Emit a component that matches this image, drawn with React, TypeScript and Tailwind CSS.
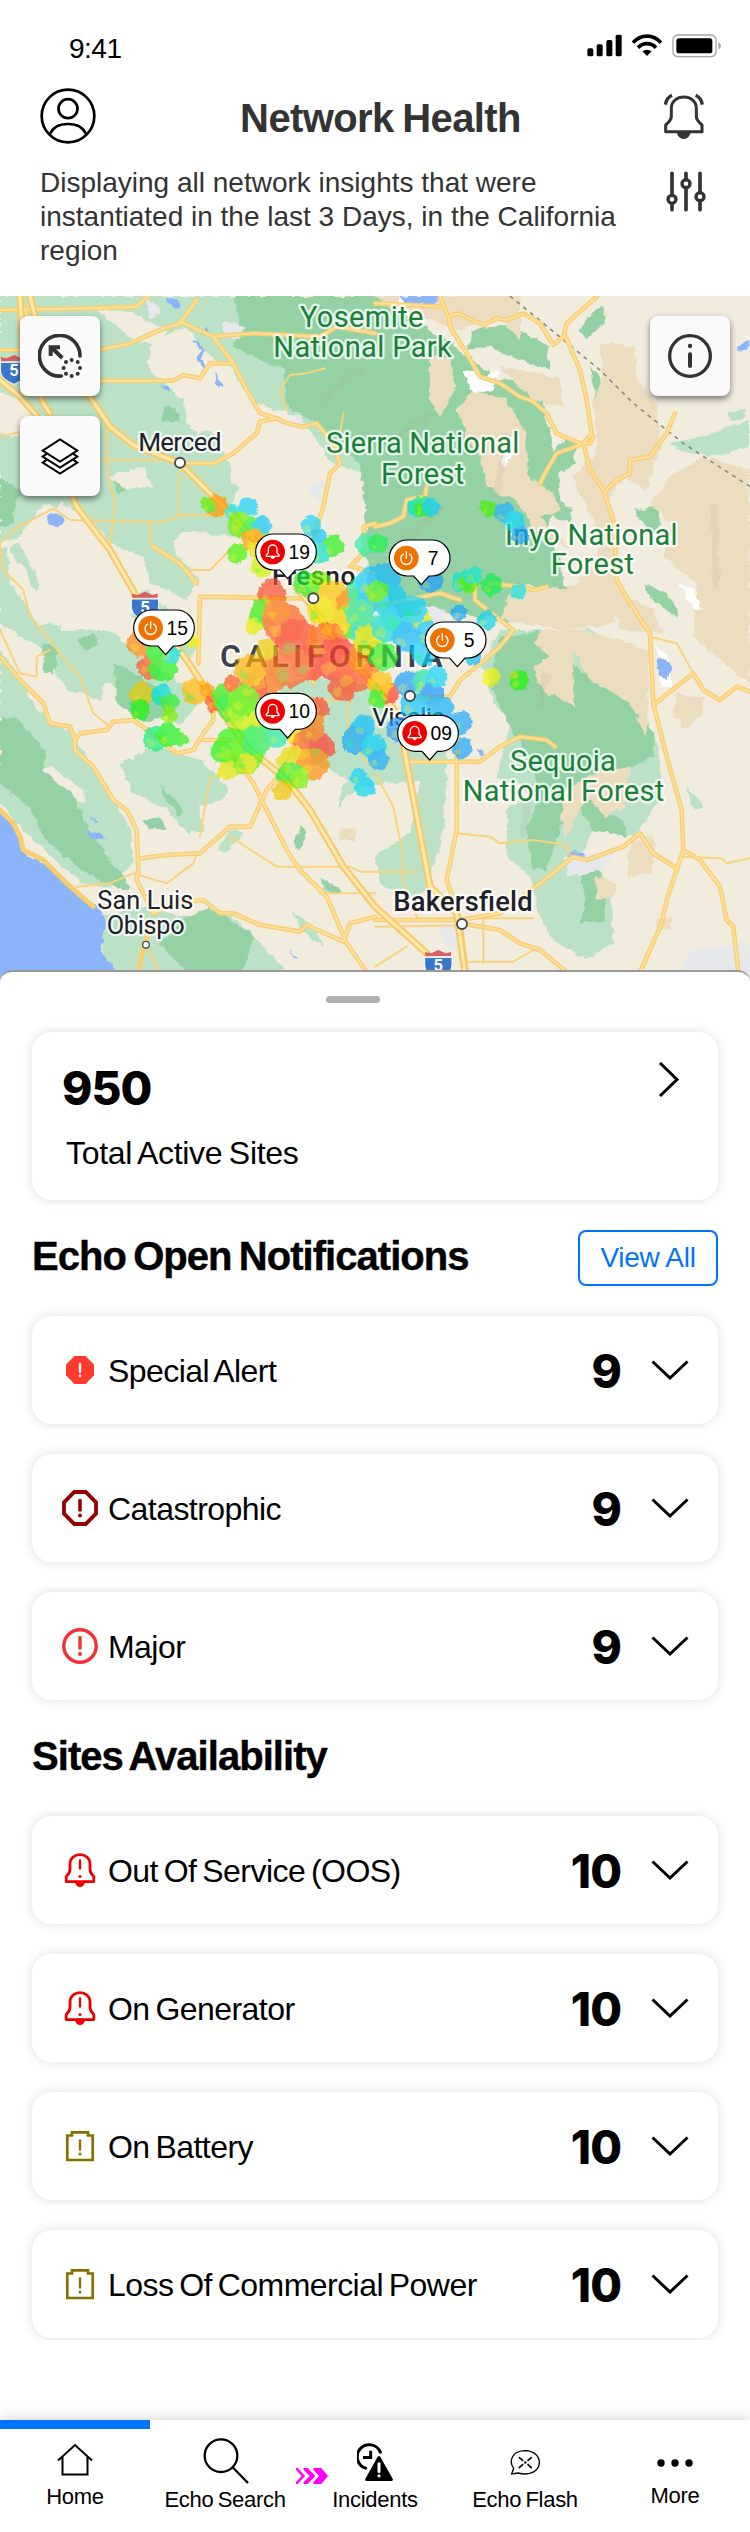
import React from "react";

/* ---------- map ---------- */

const lightGreen: string[] = [
  "M0 18H1125V560L1000 520L900 380L760 340L690 230L560 150L480 150L440 220L520 300L590 350L560 385L590 430L640 420L700 500L690 560L720 600L700 640L780 680L800 760L700 740L540 720L520 790L600 860L560 930L450 880L430 800L330 760L260 680L130 640L60 740L0 760Z",
  "M0 780L60 760L120 880L90 960L180 1010L260 1100L330 1140L300 1230L200 1200L130 1080L0 1000Z",
  "M0 1080L60 1160L110 1260L200 1320L260 1400L330 1500L390 1620L400 1720L330 1790L250 1780L130 1680L70 1620L0 1540Z",
  "M120 1020L330 1020L420 1100L540 1180L600 1240L540 1300L420 1250L330 1180L230 1150L170 1060Z",
  "M360 1420L470 1370L600 1410L690 1500L640 1540L590 1550L620 1620L560 1630L500 1560L400 1510Z",
  "M830 1180L990 1160L1125 1190L1200 1300L1340 1280L1340 1440L1330 1640L1290 1760L1300 1800L1220 1820L1140 1780L1130 1690L1230 1630L1260 1470L1090 1490L940 1420Z",
  "M350 930L440 900L530 990L600 1060L560 1110L470 1060Z",
  "M1500 1020L1780 1020L1900 1200L1980 1380L1980 1530L1900 1640L1780 1620L1740 1700L1700 1740L1830 1800L1840 1960L1760 2010L1660 1950L1620 1880L1590 1760L1520 1700L1520 1560L1600 1500L1490 1460L1510 1380L1540 1290L1480 1240L1450 1120Z",
  "M300 1880L420 1850L560 1880L690 1870L780 1960L860 2046L310 2046Z",
  "M2010 460L2110 440L2250 390L2250 470L2130 500L2030 480ZM2180 370L2240 355L2230 385L2190 390Z",
  "M1030 1480L1060 1460L1080 1490L1010 1550ZM880 1870L930 1900L970 1970L910 1930ZM650 1680L690 1620L730 1630L680 1690Z",
  "M2060 1490L2090 1520L2110 1560L2080 1560Z",
];

const green: string[] = [
  "M700 18L1125 18L1340 150L1480 260L1620 300L1680 560L1650 700L1600 780L1510 860L1450 990L1340 960L1200 960L1125 860L1090 640L1080 520L950 400L860 350L850 240L700 170L720 90Z",
  "M1120 560L1400 560L1590 640L1680 800L1690 880L1750 930L1710 950L1640 930L1560 990L1500 1000L1440 960L1200 980L1090 800Z",
  "M1420 120L1530 100L1640 170L1650 240L1560 210L1470 170L1400 180Z",
  "M1700 440L1740 460L1720 520L1660 560L1680 630L1720 660L1710 700L1660 680L1630 610L1640 520Z",
  "M1770 230L1800 260L1810 340L1840 370L1820 410L1790 390L1780 300Z",
  "M1820 160L1860 180L1880 260L1930 320L1970 400L1970 430L1920 470L1910 440L1930 380L1870 300L1830 220Z",
  "M1740 120L1780 60L1810 50L1815 100L1780 130L1760 150Z",
  "M1840 490L1890 480L1890 530L1850 570L1830 540Z",
  "M1900 660L1970 650L1985 700L1960 730L1910 680Z",
  "M2050 780L2100 790L2090 830L2060 820Z",
  "M1930 880L2000 910L2040 980L2010 970L1950 920Z",
  "M1500 1040L1650 1020L1720 1130L1880 1220L1960 1330L1960 1400L1860 1440L1790 1460L1700 1500L1700 1560L1640 1740L1600 1740L1580 1620L1620 1520L1600 1430L1530 1310L1470 1180Z",
  "M1740 1500L1800 1560L1870 1590L1880 1640L1780 1620L1740 1560Z",
  "M1900 1680L1940 1700L1900 1760L1880 1740Z",
  "M1740 1760L1800 1740L1820 1900L1740 1900L1760 1820Z",
  "M0 1280L60 1290L140 1390L130 1440L220 1520L280 1640L390 1790L370 1800L240 1740L130 1640L90 1550L0 1480Z",
  "M480 1480L550 1560L540 1580L490 1520ZM340 1120L470 1190L520 1270L430 1300L350 1240Z",
  "M480 1960L560 1880L640 1850L760 1940L730 2046L560 2046Z",
  "M0 560L60 600L40 700L0 710ZM230 1050L280 1030L300 1060L260 1080Z",
  "M900 1600L920 1630L900 1680L880 1660ZM960 1760L1020 1800L1010 1810L970 1800Z",
  "M490 350L530 350L540 390L490 400ZM340 570L380 600L350 610Z",
  "M130 1060L180 1080L160 1150L130 1150ZM430 1590L480 1580L500 1620L450 1620Z",
];

const beige: string[] = [
  "M270 50L400 70L500 120L470 170L400 150L330 90Z",
  "M450 150L560 110L610 180L690 250L620 300L740 330L780 440L830 510L860 570L930 600L1000 640L1010 720L930 760L900 900L820 950L780 780L700 640L720 590L640 420L570 420L550 330L450 240Z",
  "M320 560L430 530L460 590L380 600Z",
  "M180 640L290 700L340 800L430 920L380 1000L200 900L150 760Z",
  "M540 730L590 750L640 830L620 900L540 790Z",
  "M0 310L80 330L150 400L60 440L0 430Z",
  "M20 760L80 850L150 1000L120 1010L30 880Z",
  "M50 1460L150 1430L250 1500L260 1540L140 1520L80 1520Z",
];

const tan: string[] = [
  "M1290 200L1350 200L1370 300L1320 380L1290 330ZM1480 18L1125 18L1180 60L1290 90L1370 120L1500 80L1560 150L1560 18Z",
  "M1500 230L1580 240L1680 270L1690 350L1600 330Z",
  "M1370 360L1420 300L1520 330L1580 430L1580 560L1650 600L1680 660L1620 680L1720 780L1600 720L1550 630L1460 590L1440 500L1400 440Z",
  "M1800 160L1900 170L1910 260L1970 340L1980 470L1940 600L1870 560L1820 640L1860 720L1850 900L1960 960L1990 1030L1870 1020L1800 900L1790 720L1720 560L1790 480L1780 330L1810 260Z",
  "M2010 560L2110 500L2250 540L2250 1180L2150 1100L2080 1040L2090 880L1990 800L2010 700L1950 640Z",
  "M1540 880L1700 900L1780 830L1840 920L1840 1000L1700 1020L1500 990Z",
  "M1620 1020L1740 1020L1820 1040L1950 1080L1940 1340L1890 1240L1770 1170L1720 1080L1720 1250L1630 1200L1600 1130L1650 1100L1600 1060Z",
  "M1700 1500L1780 1450L1890 1430L1880 1550L1820 1580L1760 1520L1720 1600L1700 1640L1680 1580Z",
  "M2030 1210L2110 1220L2110 1270L2050 1320L2020 1270Z",
  "M1890 1660L1960 1640L1960 1750L1880 1760ZM1790 1760L1850 1780L1840 1820L1790 1830Z",
  "M1020 1615H1065V1653H1020ZM1970 1890L2010 1880L2010 1920L1970 1920Z",
];

const blueWater: string[] = [
  "M1200 18L1330 18L1300 35L1250 48L1215 35Z",
  "M490 18L530 30L545 50L530 60L500 40Z",
  "M140 680L180 670L195 690L165 715L150 700Z",
  "M1970 1110L1995 1105L2020 1130L2000 1170L1975 1150Z",
  "M1700 1685L1760 1690L1760 1702L1700 1700Z",
  "M2215 170L2245 150L2245 175L2215 180ZM1530 290L1555 310L1535 312Z",
  "M255 1625L300 1628L320 1650L265 1640ZM270 1575L300 1600L285 1600ZM870 1980L895 2010L880 2005Z",
  "M480 285L505 290L500 305ZM640 240L670 290L655 290ZM1430 1375L1455 1385L1440 1400Z",
];

const minorRoads: string[] = [
  "M320 400L325 560L345 640L330 770",
  "M540 530L535 670M300 510H530M450 700L455 770L560 840H630L690 780",
  "M0 760L40 720L160 655L210 690L500 695L540 675L680 676",
  "M0 760L10 840L70 900L90 980L180 1090L240 1160L280 1270L330 1310",
  "M860 360L840 300L870 255L920 250L975 235M1030 370L1020 430",
  "M230 1790L330 1780L400 1750L500 1780L580 1720L590 1690",
  "M690 1640L830 1730L1050 1730L1080 1745H1250",
  "M1125 1450L1180 1550L1210 1700V1780L1250 1880M1370 1630L1470 1640L1500 1660L1600 1650L1700 1665L1710 1700",
  "M0 1020L60 1150L110 1160L110 1100L150 1080",
  "M2050 1700L2165 1705L2180 1720L2250 1705M1950 1040L2030 1060L2080 1150",
  "M1250 1885H1600M1450 1890V2020M1125 1910L1450 1905M1125 2030L1220 1970M1400 2015L1540 2015L1600 1980",
  "M0 440L60 425M630 1460L600 1640M850 1430L900 1330L930 1230H1020",
  "M960 1810H1125M1045 1180V1320L1100 1420",
  "M440 1970L480 2046",
];

const roads: string[] = [
  "M0 60L270 55L410 50L445 18",
  "M300 180L390 160L480 120L540 100L590 30",
  "M0 180H70L100 130L60 18",
  "M540 95L640 140L700 220L740 300L780 370L830 385",
  "M640 140L760 130L960 140L1010 110L1125 130",
  "M300 272L520 272L550 255L600 265L630 220L700 220",
  "M830 385L860 400L910 410L950 400L1000 460L1020 520L990 550L970 650L940 740",
  "M830 385L780 395L770 430L700 490L640 520H560",
  "M1125 850L1090 840L1060 830M1125 700L1090 710L1100 780L1050 830",
  "M1125 40L1320 50M1320 18L1345 80L1375 70L1450 105L1490 85L1520 90L1570 70L1620 100L1660 165L1690 140L1700 100L1790 20",
  "M1345 80L1350 110L1400 190L1440 260L1500 280L1560 320L1600 335L1640 370L1670 430L1740 460L1770 460L1780 440",
  "M1695 135L1740 240L1760 330L1775 430L1750 460L1770 540L1810 600L1840 690L1850 870L1890 940L1950 1030L1960 1240L2000 1400L2045 1560L2050 1680L2000 1830L1985 1900L1920 2046",
  "M2050 1680L2100 1710L2160 1790L2180 1890L2200 1910L2215 2046",
  "M1815 605L1850 570L1890 550V510L1950 500L2000 430L2025 370",
  "M1960 1245L2080 1150L2110 1200L2160 1230L2210 1190L2250 1205",
  "M1740 465L1670 490L1640 540L1620 580",
  "M1125 710L1170 700L1210 680L1220 630L1275 620L1280 590",
  "M1380 930L1320 910L1220 930L1125 950M1470 880L1560 890L1600 900L1640 890M1425 880V930L1500 990L1540 1020L1500 1070L1430 1130L1380 1170L1350 1220H1240",
  "M600 920L870 925H940M600 920L595 1120M590 880L540 820L460 770",
  "M0 1100L70 1180L130 1240L150 1300L210 1310L225 1350L225 1380L280 1430L340 1530L380 1560L410 1620L415 1740L410 1770L460 1870",
  "M225 1350L240 1330L320 1320L340 1295L400 1290L470 1340L530 1390L580 1380L610 1330L640 1290L640 1230M610 1350H690",
  "M420 1705L500 1695L600 1690L690 1610L750 1610L800 1500L850 1440",
  "M460 1870L520 1840L610 1830L660 1870L700 1870L780 1905L900 1925L920 1905L1030 1955L1050 1900L1125 1880",
  "M700 1400L760 1480L860 1680L900 1740L980 1820L1040 1960L1100 2046",
  "M1230 1415H1440L1500 1370L1560 1340L1640 1350L1665 1370",
  "M1370 1300V1620L1340 1770L1380 1890L1400 2046",
  "M1125 1890H1380L1500 1870L1620 1780L1720 1700L1760 1710L1870 1670L1920 1630L1960 1690L2030 1735",
  "M1380 1900L1500 1920L1560 1960L1620 1980L1700 2046",
  "M940 925L940 1080V1180M930 920L890 860",
];

const highways: string[] = [
  "M0 270L60 320L130 400L230 650L330 780L410 920M470 990L560 1110L640 1230L740 1370L860 1470L930 1560L1030 1730L1125 1850L1280 1990",
  "M90 18L110 100L150 250L270 320L330 410L400 465L540 520L640 620L700 680L780 770L880 880L960 980L1010 1060L1100 1160L1200 1280L1215 1390L1290 1790L1370 1870L1395 2046",
  "M60 18L70 200L130 340L150 370",
];

type Spot = [number, number, number, string];
const heat: Spot[] = [
  [650, 648, 30, "#f39a2e"], [625, 645, 20, "#7fe03a"], [700, 665, 22, "#4fd8d0"], [745, 650, 26, "#46c4ea"], [720, 705, 34, "#8ee43a"],
  [765, 720, 36, "#5fe06a"], [785, 705, 26, "#46bde8"], [760, 750, 32, "#f0a030"], [712, 790, 28, "#6ce53e"], [785, 830, 30, "#d8ec3a"], [770, 780, 24, "#e8dc3a"],
  [935, 705, 28, "#4cc8e6"], [955, 740, 22, "#3fb8ea"], [1000, 768, 30, "#54e04c"], [960, 790, 28, "#40d4c0"], [1100, 765, 30, "#5ce0b4"], [1135, 760, 26, "#50e070"],
  [815, 912, 40, "#ea5a44"], [790, 970, 38, "#62dc40"], [760, 1010, 22, "#e0e840"], [850, 1000, 56, "#ec6a40"], [890, 1050, 58, "#e85040"], [830, 960, 36, "#f08440"],
  [920, 880, 36, "#52dc60"], [960, 880, 32, "#8fe43e"], [1000, 920, 46, "#f0c430"], [1050, 935, 36, "#f08c34"], [1080, 900, 36, "#5ad8a0"], [1110, 880, 42, "#44c4ea"],
  [1100, 940, 34, "#3fb8ea"], [1150, 870, 46, "#40b0ea"], [1040, 1000, 44, "#60e05a"], [1090, 1020, 34, "#46cce0"], [1170, 930, 46, "#40c0e8"], [1130, 905, 30, "#7ce040"],
  [1000, 1000, 44, "#f0d034"], [960, 960, 36, "#e8e03c"], [980, 1060, 56, "#ee7038"], [1010, 1110, 60, "#e04a44"], [930, 1120, 48, "#e24e44"], [1060, 1150, 56, "#e66440"],
  [1030, 1190, 40, "#e85a44"], [870, 1130, 56, "#e87044"], [800, 1160, 52, "#ee7c3c"], [760, 1190, 38, "#ea5844"], [750, 1140, 42, "#f0b434"], [800, 1080, 30, "#e0c838"],
  [1100, 1100, 50, "#f08038"], [1110, 1050, 44, "#d8e03c"], [1150, 1100, 38, "#60e060"], [1165, 1210, 30, "#f05040"], [1140, 1180, 34, "#f0c030"], [1130, 1225, 24, "#5ce050"],
  [1080, 970, 40, "#60d8a0"], [1200, 980, 50, "#40bce8"], [1160, 1010, 42, "#44d0c8"], [1260, 990, 30, "#e0e83c"], [1240, 960, 38, "#46c8e4"], [1280, 1030, 34, "#42c0ea"],
  [1220, 1040, 40, "#3cb0e8"], [1270, 1090, 34, "#42c4e8"], [1220, 1180, 34, "#3c98e8"], [1275, 1175, 34, "#50d8b0"], [1295, 1210, 32, "#3c90e8"], [1310, 1160, 30, "#42c8e8"],
  [1240, 1245, 36, "#3cb8ea"], [1320, 1260, 38, "#3ca8ea"], [1385, 1295, 30, "#449ceb"], [1385, 1375, 28, "#3f9ceb"], [1355, 1310, 30, "#44b0ea"], [1200, 1320, 36, "#4494eb"],
  [1090, 1310, 32, "#3cb4e8"], [1065, 1350, 36, "#3fa0ec"], [1120, 1370, 34, "#3cc4e0"], [1135, 1410, 28, "#44a4ec"], [1095, 1490, 28, "#3cc8ee"], [1075, 1460, 22, "#44c8e8"],
  [1290, 870, 34, "#3f98e8"], [1250, 650, 26, "#40d4cc"], [1270, 648, 28, "#54d898"], [1265, 660, 20, "#4cdc4c"], [1292, 652, 24, "#40c4dc"],
  [1465, 655, 24, "#6cdf3a"], [1515, 668, 28, "#46a8e6"], [1545, 695, 28, "#44cce8"], [1560, 735, 26, "#3c98e8"], [1385, 875, 28, "#40d4cc"], [1408, 880, 28, "#74e03c"],
  [1420, 855, 24, "#44d8cc"], [1475, 885, 30, "#44dc6c"], [1555, 905, 22, "#44d4dc"], [1378, 968, 22, "#3c9ce8"], [1460, 990, 28, "#40c4d8"], [1420, 1100, 24, "#3cace8"],
  [1475, 1162, 25, "#eeee3e"], [1557, 1170, 27, "#4ee03c"], [1540, 1155, 10, "#c0d83c"],
  [420, 1060, 36, "#f08c3c"], [450, 1130, 34, "#ec6444"], [490, 1130, 40, "#52e04c"], [510, 1090, 28, "#48d0d8"], [580, 1055, 18, "#f0ec34"], [470, 1080, 30, "#58dc50"],
  [425, 1210, 32, "#e0c83c"], [420, 1260, 28, "#50e040"], [485, 1215, 30, "#3cd0d4"], [510, 1240, 26, "#5cdc58"], [508, 1275, 22, "#94e43c"], [585, 1205, 36, "#f0b838"],
  [465, 1345, 34, "#44dc90"], [505, 1335, 34, "#4ce050"], [545, 1350, 18, "#60e04c"], [645, 1235, 28, "#ee5c3c"], [620, 1200, 20, "#f0982e"], [680, 1220, 40, "#5ce04c"],
  [700, 1250, 44, "#50dc5c"], [740, 1280, 50, "#a8e83a"], [780, 1310, 46, "#dce83c"], [730, 1230, 44, "#7ce240"], [700, 1370, 52, "#5ce448"], [735, 1400, 48, "#7ce43c"],
  [665, 1385, 30, "#58e048"], [682, 1442, 28, "#e0e03c"], [770, 1350, 42, "#58e07c"], [830, 1335, 32, "#54dcb0"], [900, 1330, 40, "#e8d83c"], [930, 1270, 42, "#ec9038"],
  [960, 1250, 26, "#ea5c48"], [930, 1370, 50, "#e86c48"], [965, 1370, 36, "#e25048"], [880, 1420, 44, "#dcd83c"], [940, 1420, 44, "#e8943c"], [870, 1455, 36, "#58e060"],
  [900, 1465, 28, "#90e43c"], [847, 1500, 28, "#e0c030"], [740, 1420, 28, "#dce03c"], [695, 1180, 22, "#ee6440"], [940, 1320, 30, "#e88040"],
];

const Shield = ({ x, y }: { x: number; y: number }) => (
  <g transform={`translate(${x} ${y})`}>
    <path d="M2 6L20 10L42 0L64 10L80 6V18H4Z" fill="#d75f5f" />
    <path d="M1 22H83V42C83 68 66 76 42 88C18 76 1 68 1 42Z" fill="#3b76c8" stroke="#fff" strokeWidth="3" />
    <text x="42" y="64" textAnchor="middle" fontSize="50" fontWeight="700" fill="#fff">5</text>
  </g>
);

const Dot = ({ x, y, r = 15 }: { x: number; y: number; r?: number }) => (
  <circle cx={x} cy={y} r={r} fill="#fff" stroke="#444b50" strokeWidth={r / 2.6} />
);

type LabelProps = { x: number; y: number; w: number; size: number; children: string; color?: string; weight?: number };
const Label = ({ x, y, w, size, children, color = "#202128", weight = 400 }: LabelProps) => (
  <text x={x} y={y} textLength={w} fontSize={size} fill={color} fontWeight={weight} stroke="#ffffff" strokeOpacity="0.75" strokeWidth="14" strokeLinejoin="round" paintOrder="stroke">
    {children}
  </text>
);

const Marker = ({ x, y, kind, n }: { x: number; y: number; kind: "bell" | "power"; n: string }) => (
  <g transform={`translate(${x} ${y})`}>
    <path d="M55 2H129A54 54 0 0 1 129 110H120L97 136L74 110H55A54 54 0 0 1 55 2Z" fill="#fff" stroke="#000" strokeWidth="3.5" />
    <circle cx="52" cy="56" r="37" fill={kind === "bell" ? "#ee0000" : "#ee7200"} />
    {kind === "bell" ? (
      <g>
        <path d="M33 69V65L39 58V48A13 13 0 0 1 65 48V58L71 65V69Z" fill="none" stroke="#fff" strokeWidth="4" strokeLinejoin="round" />
        <path d="M45 71H59Q57 77 52 77T45 71Z" fill="#fff" />
      </g>
    ) : (
      <path d="M52 37V57M43 44A17 17 0 1 0 61 44" fill="none" stroke="#fff" strokeWidth="4" strokeLinecap="round" />
    )}
    <text x="132" y="76" textAnchor="middle" fontSize="58" fill="#000" fontFamily="Liberation Sans">{n}</text>
  </g>
);

const MapArt = () => (
  <svg className="block h-full w-full font-['Roboto',sans-serif]" viewBox="0 18 2250 2052" preserveAspectRatio="none">
    <defs>
      <filter id="land" x="-5%" y="-5%" width="110%" height="110%">
        <feTurbulence type="fractalNoise" baseFrequency="0.035" numOctaves="3" seed="4" />
        <feDisplacementMap in="SourceGraphic" scale="22" xChannelSelector="R" yChannelSelector="G" />
      </filter>
      <filter id="edge" x="-5%" y="-5%" width="110%" height="110%" colorInterpolationFilters="sRGB">
        <feColorMatrix in="SourceGraphic" type="saturate" values="1.5" result="vivid" />
        <feTurbulence type="fractalNoise" baseFrequency="0.05" numOctaves="3" seed="9" result="noise" />
        <feDisplacementMap in="vivid" in2="noise" scale="20" xChannelSelector="R" yChannelSelector="G" />
      </filter>
    </defs>
    <rect y="18" width="2250" height="2052" fill="#f2ecdf" />
    <g filter="url(#land)">
      {lightGreen.map((d) => <path key={d} d={d} fill="#bbe2c6" />)}
      {beige.map((d) => <path key={d} d={d} fill="#f2ecdf" />)}
      {green.map((d) => <path key={d} d={d} fill="#94d2a5" />)}
      {tan.map((d) => <path key={d} d={d} fill="#ecddc0" />)}
      <path d="M1390 240L1430 240L1450 270L1495 240L1480 300L1420 310ZM1200 18L1230 30L1210 70L1190 60ZM1500 510L1530 440L1555 430L1540 500L1515 530ZM2030 880L2080 900L2110 960L2090 960ZM1970 1060L2010 1110L2010 1190L1985 1190Z" fill="#fff" />
      <path d="M670 100L735 110L720 150L680 140ZM440 18L480 60L460 90L440 60ZM920 600L970 570L960 630L930 610ZM870 370L910 390L900 420ZM1260 950L1340 960L1330 1000L1270 980ZM2070 1980L2250 1960V2070H2040ZM1690 1700L1850 1690L1800 1740L1700 1760ZM1320 1900L1390 1920L1380 1980L1330 1960Z" fill="#e7e8ec" />
      {blueWater.map((d) => <path key={d} d={d} fill="#8cb4fb" />)}
      <path d="M-30 1540L30 1590L60 1650L80 1690L180 1750L240 1820L300 1850L320 1900L300 1980L330 2020L400 2090L-30 2090Z" fill="#8cb4fb" />
      <path d="M580 150L610 180L595 205L620 235M615 110L625 130" fill="none" stroke="#8cb4fb" strokeWidth="9" />
      <path d="M1150 470L1290 370M1200 760L1330 650M960 330L1090 230M1520 430L1490 620M2140 640L2150 900M1640 1150L1620 1250M1590 1480L1570 1640" stroke="#a8a98a" strokeOpacity="0.16" strokeWidth="22" fill="none" />
    </g>
    <path d="M1530 18L1630 100L1800 240L1900 340L2050 460L2250 590" fill="none" stroke="#8e8a86" strokeWidth="5" strokeDasharray="12 14" />
    <g fill="none" strokeLinejoin="round" strokeLinecap="round">
      <path d="M0 1560L40 1600L60 1640L70 1680L130 1710L200 1780L280 1850M455 1900L430 1970L415 2050" stroke="#f8ce71" strokeWidth="15" />
      {minorRoads.map((d) => <path key={d} d={d} stroke="#f8d27c" strokeWidth="6" />)}
      {roads.map((d) => <path key={d} d={d} stroke="#f8cf74" strokeWidth="14" />)}
      {roads.map((d) => <path key={d} d={d} stroke="#fddf95" strokeWidth="6" />)}
      {highways.map((d) => <path key={d} d={d} stroke="#f7ca69" strokeWidth="22" />)}
      {highways.map((d) => <path key={d} d={d} stroke="#fde8ad" strokeWidth="9" />)}
    </g>
    <Shield x={0} y={195} />
    <Shield x={393} y={905} />
    <Shield x={1273} y={1980} />
    <Label x={900} y={110} w={370} size={87} color="#1a8038">Yosemite</Label>
    <Label x={820} y={200} w={535} size={87} color="#1a8038">National Park</Label>
    <Label x={415} y={482} w={250} size={79}>Merced</Label>
    <Label x={978} y={490} w={580} size={87} color="#1a8038">Sierra National</Label>
    <Label x={1143} y={581} w={250} size={87} color="#1a8038">Forest</Label>
    <Label x={1515} y={765} w={518} size={87} color="#1a8038">Inyo National</Label>
    <Label x={1652} y={853} w={250} size={87} color="#1a8038">Forest</Label>
    <Label x={816} y={885} w={250} size={79} weight={500}>Fresno</Label>
    <Label x={660} y={1130} w={668} size={96} color="#3c414c" weight={600}>CALIFORNIA</Label>
    <Label x={1117} y={1308} w={220} size={79}>Visalia</Label>
    <Label x={1530} y={1444} w={317} size={87} color="#1a8038">Sequoia</Label>
    <Label x={1388} y={1533} w={605} size={87} color="#1a8038">National Forest</Label>
    <Label x={1180} y={1863} w={418} size={82} weight={500}>Bakersfield</Label>
    <Label x={292} y={1858} w={288} size={76}>San Luis</Label>
    <Label x={320} y={1933} w={234} size={76}>Obispo</Label>
    <g filter="url(#edge)" opacity="0.74">
      {heat.map(([x, y, r, c]) => <circle key={`${x}-${y}`} cx={x} cy={y} r={r * 1.1} fill={c} fillOpacity="0.92" />)}
      {heat.map(([x, y, r], i) => (
        <circle key={`${x}-${y}`} cx={x - r * 0.4} cy={y + r * 0.4} r={r * 0.34} fill={i % 3 ? "#f6f040" : "#30e870"} fillOpacity="0.3" />
      ))}
    </g>
    <Dot x={540} y={518} />
    <Dot x={940} y={925} />
    <Dot x={1230} y={1218} />
    <Dot x={1386} y={1902} />
    <Dot x={438} y={1964} r={10} />
    <Marker x={766} y={730} kind="bell" n="19" />
    <Marker x={1167} y={748} kind="power" n="7" />
    <Marker x={1275} y={994} kind="power" n="5" />
    <Marker x={400} y={958} kind="power" n="15" />
    <Marker x={766} y={1208} kind="bell" n="10" />
    <Marker x={1192} y={1274} kind="bell" n="09" />
  </svg>
);

const MapButton = ({ children }: { children: React.ReactNode }) => (
  <button className="flex h-20 w-20 items-center justify-center rounded-lg bg-[#fafafa] shadow-[0_3px_6px_rgba(0,0,0,0.5)]">{children}</button>
);

/* ---------- icons ---------- */

const StatusIcons = () => (
  <svg className="h-[25px] w-[135px]" viewBox="20 25 405 75">
    <rect x="21" y="71" width="18" height="24" rx="5" />
    <rect x="49" y="59" width="18" height="36" rx="5" />
    <rect x="78" y="46" width="18" height="49" rx="5" />
    <rect x="106" y="30" width="18" height="65" rx="5" />
    <g fill="none" stroke="#000" strokeWidth="11">
      <path d="M158 54C182 28 218 28 242 54" />
      <path d="M173 69C188 53 212 53 227 69" />
    </g>
    <path d="M186 80Q200 70 214 80L200 94Z" />
    <rect x="278" y="31" width="129" height="65" rx="15" fill="none" stroke="#a6a6a6" strokeWidth="4" />
    <rect x="288" y="41" width="108" height="45" rx="8" />
    <path d="M414 53Q422 57 422 63.500T414 75Z" fill="#a6a6a6" />
  </svg>
);

const Avatar = () => (
  <svg className="h-14 w-14" viewBox="0 0 56 56" fill="none" stroke="#000" strokeWidth="2.700">
    <circle cx="28" cy="28" r="26.300" />
    <circle cx="28" cy="20.700" r="9.500" />
    <path d="M10 46C13 39 20 36 28 36S43 39 46 46" />
  </svg>
);

const Bell = () => (
  <svg className="h-[47px] w-[42px]" viewBox="249 204 126 141" fill="none" stroke="#333" strokeWidth="9">
    <path d="M257 320V300Q274 286 274 274V250C274 205 349 205 349 250V274Q349 286 366 300V320Z" strokeLinejoin="round" />
    <path d="M290 322H332Q328 342 311 342T290 322Z" fill="#333" stroke="none" />
    <path d="M276 211Q260 218 256 239M347 211Q363 218 367 239" strokeWidth="10" />
  </svg>
);

const Sliders = () => (
  <svg className="h-[41px] w-[42px]" viewBox="255 439 126 123" fill="none" stroke="#333" strokeWidth="11" strokeLinecap="round">
    <path d="M276 446V512M276 537V555M318 446V465M318 489V555M360 446V504M360 529V555" />
    <g strokeWidth="10">
      <circle cx="276" cy="524" r="12" />
      <circle cx="318" cy="477" r="12" />
      <circle cx="360" cy="516" r="12" />
    </g>
  </svg>
);

const Chevron = () => (
  <svg className="h-5 w-[38px] shrink-0" viewBox="0 0 38 20" fill="none" stroke="#000" strokeWidth="3">
    <path d="M1.500 1.500L19 18L36.500 1.500" />
  </svg>
);

const octagon = "M12.300 2H23.700L34 12.300V23.700L23.700 34H12.300L2 23.700V12.300Z";

const SpecialIcon = () => (
  <svg className="h-9 w-9" viewBox="0 0 36 36">
    <path d="M12.500 4H23.500L32 12.500V23.500L23.500 32H12.500L4 23.500V12.500Z" fill="#ff3b30" />
    <path d="M18 12V20" stroke="#fff" strokeWidth="2.400" strokeLinecap="round" />
    <circle cx="18" cy="23.800" r="1.400" fill="#fff" />
  </svg>
);
const CatastrophicIcon = () => (
  <svg className="h-9 w-9" viewBox="0 0 36 36">
    <path d={octagon} fill="none" stroke="#960000" strokeWidth="3.800" />
    <path d="M18 10.500V20" stroke="#960000" strokeWidth="3.600" strokeLinecap="round" />
    <circle cx="18" cy="25.500" r="2" fill="#960000" />
  </svg>
);
const MajorIcon = () => (
  <svg className="h-9 w-9" viewBox="0 0 36 36">
    <circle cx="18" cy="18" r="16.200" fill="none" stroke="#f03135" strokeWidth="3.400" />
    <path d="M18 9.500V20" stroke="#f03135" strokeWidth="3.400" strokeLinecap="round" />
    <circle cx="18" cy="26" r="2" fill="#f03135" />
  </svg>
);
const AlarmIcon = () => (
  <svg className="h-9 w-9" viewBox="0 0 36 36" fill="none" stroke="#ee0000" strokeWidth="2.800">
    <path d="M4.200 29.600V24.500Q8 21 8 17.500V12C8 -.5 28 -.5 28 12V17.500Q28 21 31.800 24.500V29.600Z" strokeLinejoin="round" />
    <path d="M18 8.500V16.500" strokeWidth="2.400" strokeLinecap="round" />
    <circle cx="18" cy="24.500" r="1.500" fill="#ee0000" stroke="none" />
    <path d="M13 30H23Q22 35 18 35T13 30Z" fill="#ee0000" stroke="none" />
  </svg>
);
const BatteryIcon = () => (
  <svg className="h-9 w-9" viewBox="0 0 36 36" fill="none" stroke="#857000" strokeWidth="2.700">
    <path d="M5.300 32V7.500H10V4.300H26V7.500H30.700V32Z" />
    <path d="M18 12.500V21.500" strokeWidth="2.400" strokeLinecap="round" />
    <circle cx="18" cy="26" r="1.500" fill="#857000" stroke="none" />
  </svg>
);

/* ---------- sheet ---------- */

const cardShadow = "shadow-[0_0_12px_rgba(0,0,0,0.14)]";
const numberText = "font-['Inter',sans-serif] text-[46px] leading-[50px] font-extrabold tracking-[-1px]";
const headingText = "text-[40px] leading-[44px] font-bold tracking-[-0.95px] [word-spacing:-3px] [-webkit-text-stroke:0.4px_#000]";

const Row = ({ icon, label, count }: { icon: React.ReactNode; label: string; count: string }) => (
  <div className={`flex h-[108px] items-center rounded-[20px] bg-white pr-[29px] pl-[30px] ${cardShadow}`}>
    {icon}
    <span className="ml-[10px] flex-1 pt-0.5 text-[32px] leading-9 tracking-[-0.55px] whitespace-nowrap [word-spacing:-2.5px]">{label}</span>
    <span className={`mr-[30px] pt-0.5 ${numberText}`}>{count}</span>
    <Chevron />
  </div>
);

const navText = "text-[22px] leading-6 tracking-[-0.3px] [word-spacing:-1.5px] whitespace-nowrap";

export default function App() {
  return (
    <div className="flex h-[2532px] w-[750px] flex-col overflow-hidden bg-white font-['Liberation_Sans',Arial,sans-serif] text-black">
      <header className="h-[296px] shrink-0 pt-8">
        <div className="flex h-[34px] items-start justify-between pr-[28px] pl-[69px]">
          <span className="text-[28px] leading-[34px] tracking-[-0.5px]">9:41</span>
          <div className="pt-px"><StatusIcons /></div>
        </div>
        <div className="mt-[22px] grid h-14 grid-cols-[120px_1fr_120px] items-center">
          <div className="pl-10"><Avatar /></div>
          <h1 className="pt-1 pl-[11px] text-center text-[40px] leading-[44px] font-bold tracking-[-0.6px] [word-spacing:-2px] text-[#333]">Network Health</h1>
          <div className="flex justify-end pr-[45px]"><Bell /></div>
        </div>
        <div className="mt-[22px] flex justify-between pr-[43px] pl-[40px]">
          <p className="w-[590px] text-[28px] leading-[34px] text-[#333]">
            Displaying all network insights that were instantiated in the last 3 Days, in the California region
          </p>
          <div className="pt-[5px]"><Sliders /></div>
        </div>
      </header>

      <section className="relative h-[684px] shrink-0 overflow-hidden">
        <MapArt />
        <div className="absolute inset-x-5 top-5 flex items-start justify-between">
          <div className="flex flex-col gap-5">
            <MapButton>
              <svg className="h-11 w-11" viewBox="0 0 132 132" fill="none" stroke="#333" strokeWidth="11">
                <path d="M70 126A61 61 0 1 1 126 66" strokeLinecap="round" />
                <path d="M73 72L42 42M38 66V40H66" strokeWidth="12" />
                <g fill="#333" stroke="none">
                  <circle cx="101" cy="78" r="6" /><circle cx="119" cy="84" r="6" /><circle cx="126" cy="102" r="6" /><circle cx="119" cy="119" r="6" />
                  <circle cx="101" cy="126" r="6" /><circle cx="84" cy="119" r="6" /><circle cx="77" cy="102" r="6" /><circle cx="84" cy="84" r="6" />
                </g>
              </svg>
            </MapButton>
            <MapButton>
              <svg className="h-[38px] w-[38px]" viewBox="0 0 114 114" fill="none" stroke="#000" strokeWidth="6">
                <path d="M57 7L109 41L57 74L5 41Z" />
                <path d="M18 50L5 59L57 92L109 59L96 50M18 68L5 77L57 110L109 77L96 68" />
              </svg>
            </MapButton>
          </div>
          <MapButton>
            <svg className="h-11 w-11" viewBox="0 0 132 132" fill="none" stroke="#333" strokeWidth="10">
              <circle cx="66" cy="66" r="61" />
              <path d="M66 61V96" strokeWidth="12" strokeLinecap="round" />
              <circle cx="66" cy="36" r="6.500" fill="#333" stroke="none" />
            </svg>
          </MapButton>
        </div>
      </section>

      <main className="relative -mt-[10px] h-[1370px] shrink-0 overflow-hidden rounded-t-[12px] border-t-2 border-[#999] bg-white px-8">
        <div className="mt-6 ml-[294px] h-[7px] w-[54px] rounded-[4px] bg-[#b0b0b0]" />

        <div className={`mt-[29px] flex h-[168px] justify-between rounded-[20px] bg-white pt-[31px] pr-[38px] pl-[30px] ${cardShadow}`}>
          <div>
            <div className={numberText}>950</div>
            <div className="mt-[22px] ml-1 text-[32px] leading-9 tracking-[-0.3px] [word-spacing:-2px]">Total Active Sites</div>
          </div>
          <svg className="-mt-[3px] h-[38px] w-[22px]" viewBox="0 0 22 38" fill="none" stroke="#000" strokeWidth="3">
            <path d="M2 3L19 19.500L2 36" />
          </svg>
        </div>

        <div className="mt-[30px] flex h-14 items-center justify-between">
          <h2 className={`-mt-1 ${headingText}`}>Echo Open Notifications</h2>
          <button className="h-14 w-[140px] rounded-lg border-2 border-[#0073ff] text-[28px] tracking-[-0.3px] text-[#0073ff]">View All</button>
        </div>
        <div className="mt-[30px] flex flex-col gap-[30px]">
          <Row icon={<SpecialIcon />} label="Special Alert" count="9" />
          <Row icon={<CatastrophicIcon />} label="Catastrophic" count="9" />
          <Row icon={<MajorIcon />} label="Major" count="9" />
        </div>

        <h2 className={`mt-[34px] ${headingText}`}>Sites Availability</h2>
        <div className="mt-[38px] flex flex-col gap-[30px]">
          <Row icon={<AlarmIcon />} label="Out Of Service (OOS)" count="10" />
          <Row icon={<AlarmIcon />} label="On Generator" count="10" />
          <Row icon={<BatteryIcon />} label="On Battery" count="10" />
          <Row icon={<BatteryIcon />} label="Loss Of Commercial Power" count="10" />
        </div>
      </main>

      <nav className="relative mt-20 grid h-28 shrink-0 grid-cols-5 bg-white shadow-[0_0_16px_rgba(0,0,0,0.2)]">
        <div className="flex flex-col items-center border-t-[9px] border-[#0073ff] pt-[14px]">
          <svg className="h-[34px] w-[38px]" viewBox="0 0 38 34" fill="none" stroke="#000" strokeWidth="2">
            <path d="M2 17.500L19 2L36 17.500M6.500 14V31.500H31.500V14" />
          </svg>
          <span className={`mt-2 ${navText}`}>Home</span>
        </div>
        <div className="flex flex-col items-center pt-[18px]">
          <svg className="ml-1 h-[47px] w-[48px]" viewBox="41 25 144 141" fill="none" stroke="#000" strokeWidth="7">
            <circle cx="95" cy="78" r="49" />
            <path d="M129 112L176 160" />
          </svg>
          <span className={`mt-[3px] ${navText}`}>Echo Search</span>
        </div>
        <div className="relative flex flex-col items-center pt-[23px]">
          <svg className="absolute top-12 -left-[4px] h-4 w-8" viewBox="318 114 96 48" fill="#ff00ff">
            <path d="M318 114H323L345 138L323 162H318V157L335 138L318 119Z" />
            <path d="M341 114H353L376 138L353 162H341V156L359 138L341 120Z" />
            <path d="M370 114H394L414 138L394 162H370V157L387 138L370 119Z" />
          </svg>
          <svg className="h-[39px] w-9" viewBox="495 41 108 114" fill="none" stroke="#000" strokeWidth="9">
            <path d="M521 115A36 36 0 1 1 565 67" strokeLinecap="round" />
            <path d="M536 63V83H513" />
            <path d="M561 83L598 149H524Z" fill="#000" strokeLinejoin="round" />
            <path d="M561 102V125" stroke="#fff" strokeWidth="9" strokeLinecap="round" />
            <circle cx="561" cy="138" r="5" fill="#fff" stroke="none" />
          </svg>
          <span className={`mt-[6px] ${navText}`}>Incidents</span>
        </div>
        <div className="flex flex-col items-center pt-[29px]">
          <svg className="h-[27px] w-8" viewBox="957 56 96 81" fill="none" stroke="#000" strokeWidth="4">
            <path d="M965 131L971 114C956 94 965 61 1006 61C1062 63 1062 130 1006 131Q995 131 985 128Z" />
            <path d="M988 82L998 90M1024 82L1014 90M988 112L998 103M1024 112L1014 103" strokeWidth="5" strokeLinecap="round" />
            <circle cx="1006" cy="96.500" r="4" fill="#000" stroke="none" />
          </svg>
          <span className={`mt-[12px] ${navText}`}>Echo Flash</span>
        </div>
        <div className="flex flex-col items-center pt-[39px]">
          <svg className="h-2 w-9" viewBox="0 0 36 8">
            <circle cx="4" cy="4" r="3.700" /><circle cx="18" cy="4" r="3.700" /><circle cx="32" cy="4" r="3.700" />
          </svg>
          <span className={`mt-[17px] ${navText}`}>More</span>
        </div>
      </nav>
    </div>
  );
}
